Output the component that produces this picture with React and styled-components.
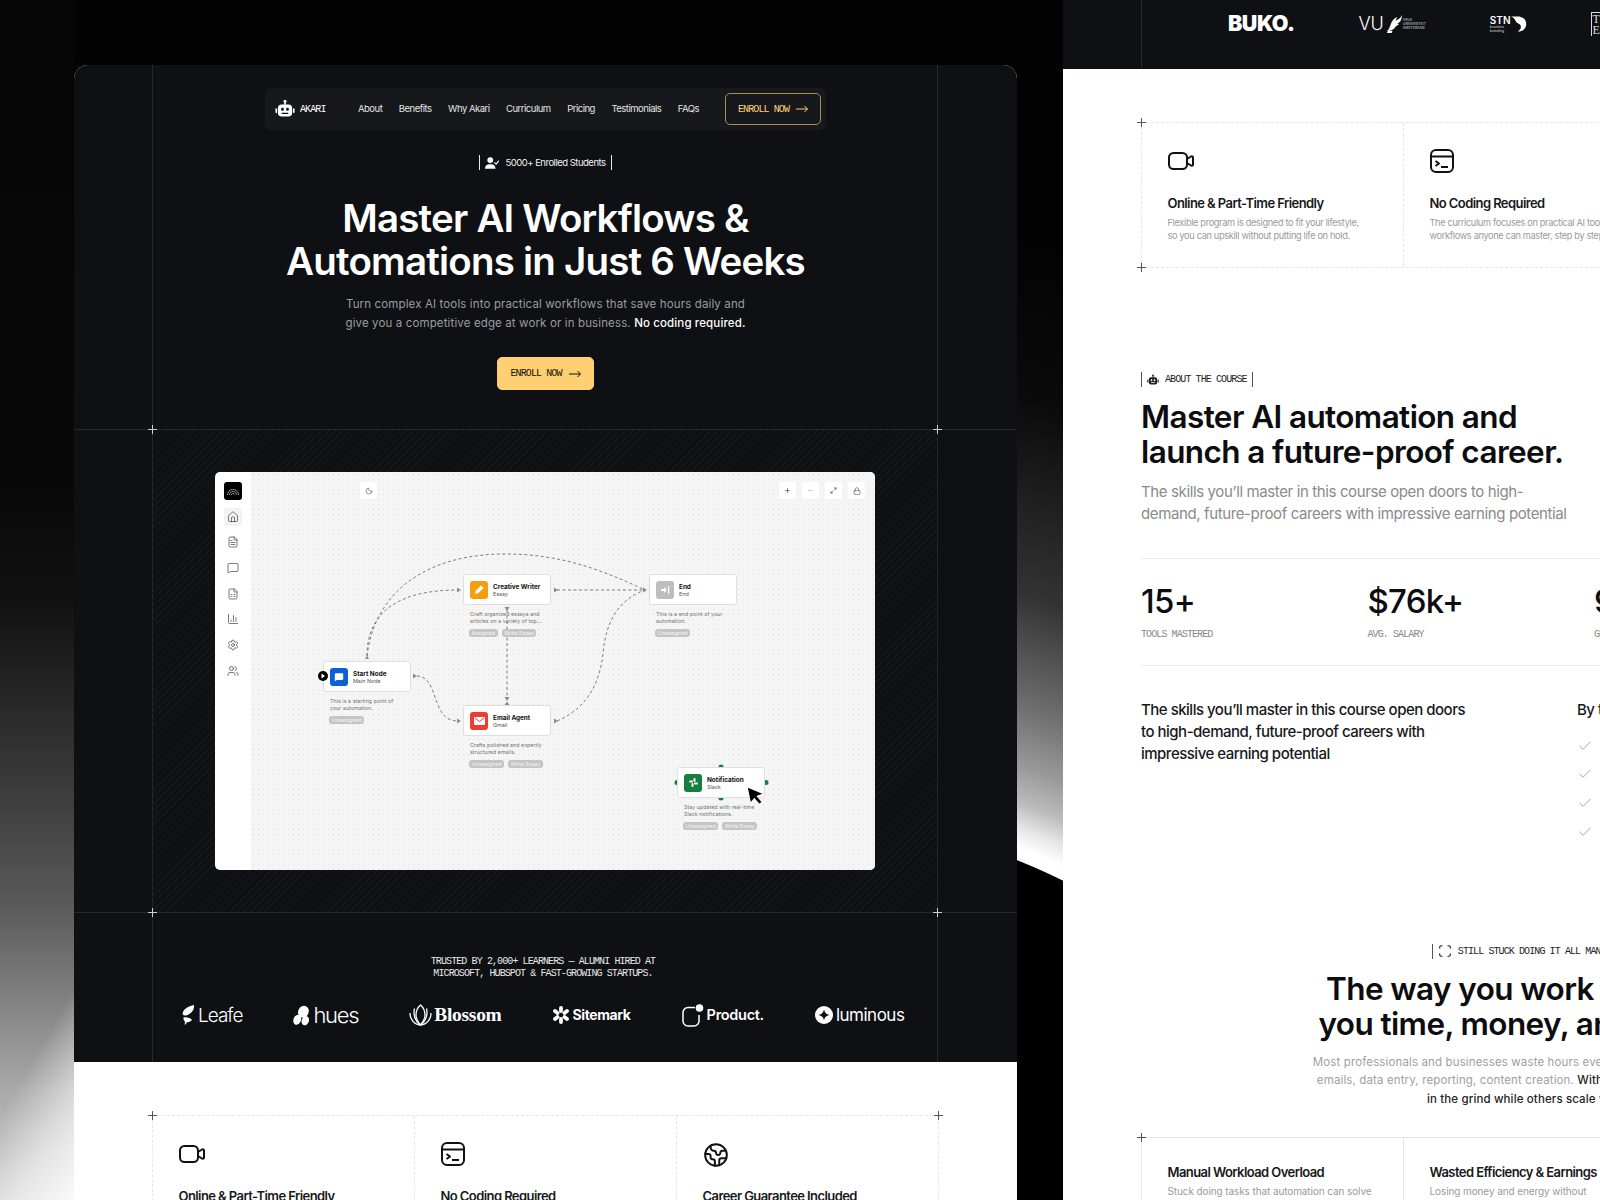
import React from 'react';
import styled, { createGlobalStyle } from 'styled-components';
import {
    Check, Earth, FileText, House, MessageSquare, FileSpreadsheet, ChartColumn,
    Settings, Users, Moon, Plus, Minus, Maximize2, Lock, Scan,
} from 'lucide-react';

const sans = `Inter, "Liberation Sans", sans-serif`;
const mono = `"Liberation Mono", "DejaVu Sans Mono", monospace`;
const dark = '#0e1014';
const guide = '#26282c';
const gold = '#ffd27a';

const GlobalStyle = createGlobalStyle`
    html, body {
        margin: 0;
        padding: 0;
        background: #030303;
    }
    * {
        box-sizing: border-box;
    }
`;

const Page = styled.div`
    width: 1600px;
    height: 1200px;
    overflow: hidden;
    display: flex;
    gap: 46px;
    padding-left: 74px;
    align-items: flex-start;
    font-family: ${sans};
    background-color: #030303;
    background-repeat: no-repeat;
    background-size: 74px 1200px, 74px 1200px, auto, auto;
    background-image:
        linear-gradient(120deg, transparent 84%, rgba(255, 255, 255, .55) 92%, rgba(255, 255, 255, .9) 100%),
        linear-gradient(180deg, #050505 0, #080808 40%, #111 50%, #3c3c3c 66%, #5a5a5a 75.5%, #8a8a8a 85%, #aaa 91%, #c8c8c8 100%),
        radial-gradient(circle at 796px 1418px, #000 599.5px, transparent 600.5px),
        radial-gradient(circle at 796px 1418px, #fff 600px, #fff 612px, #e8e8e8 630px, #bbb 655px, #999 690px, #707070 744px, #333 854px, #0a0a0a 1047px, #030303 1200px);
`;
const Window = styled.div`
    width: 943px;
    flex-shrink: 0;
    margin-top: ${p => p.$top || 0}px;
    border-radius: ${p => p.$top ? '14px 14px 0 0' : '0'};
    overflow: hidden;
    background: #fff;
`;
const DarkPanel = styled.div`
    background-color: ${dark};
    background-repeat: no-repeat;
    background-size: 1px 100%, 1px 100%;
    background-position: 78px 0, 863px 0;
    background-image: linear-gradient(${guide}, ${guide}), linear-gradient(${guide}, ${guide});
`;
const Hero = styled.section`
    height: 364px;
    padding-top: 23px;
    display: flex;
    flex-direction: column;
    align-items: center;
`;
const Nav = styled.nav`
    width: 561px;
    height: 42px;
    padding: 0 5px 0 10px;
    display: flex;
    align-items: center;
    background: #16181c;
    border-radius: 5px;
`;
const Brand = styled.div`
    width: 83px;
    display: flex;
    align-items: center;
    gap: 5px;
    color: #fff;
`;
const Mono = styled.span`
    font-family: ${mono};
    font-size: 10px;
    letter-spacing: -.9px;
    color: ${p => p.$color || '#fff'};
    white-space: nowrap;
`;
const NavLinks = styled.div`
    display: flex;
    gap: 16.5px;
    padding-bottom: 1px;
`;
const NavLink = styled.a`
    font-size: 9.5px;
    letter-spacing: -.5px;
    color: #e4e4e4;
    white-space: nowrap;
`;
const Button = styled.a`
    height: ${p => p.$solid ? 33 : 32}px;
    width: ${p => p.$solid ? 97 : 96}px;
    margin-left: ${p => p.$solid ? 0 : 'auto'};
    display: flex;
    align-items: center;
    justify-content: center;
    gap: 7px;
    border-radius: 5px;
    background: ${p => p.$solid ? '#ffcf73' : 'transparent'};
    border: 1px solid ${p => p.$solid ? '#ffcf73' : '#a98d52'};
    color: ${p => p.$solid ? '#15130c' : gold};
`;
const Badge = styled.div`
    height: 15px;
    display: flex;
    align-items: center;
    gap: ${p => p.$gap || 6}px;
    padding: 0 5px;
    border-left: 1px solid ${p => p.$line};
    border-right: 1px solid ${p => p.$line};
`;
const BadgeText = styled.span`
    font-size: 9.5px;
    letter-spacing: -.5px;
    color: #f0f0f0;
    white-space: nowrap;
`;
const HeroBadge = styled(Badge)`
    margin-top: 25px;
`;
const Title = styled.h1`
    margin: 27px 0 0;
    font-size: 38.5px;
    line-height: 43px;
    font-weight: 600;
    letter-spacing: -.8px;
    text-align: center;
    color: #fff;
    white-space: nowrap;
`;
const Lead = styled.p`
    margin: 12px 0 25px;
    font-size: 11.5px;
    line-height: 18.5px;
    letter-spacing: .13px;
    text-align: center;
    color: #9b9da1;
    white-space: nowrap;
`;
const Strong = styled.span`
    color: ${p => p.$color || '#fff'};
    font-weight: 500;
`;
const Showcase = styled.section`
    position: relative;
    height: 484px;
    padding: 0 79px 0 78px;
    border-top: 1px solid ${guide};
    border-bottom: 1px solid ${guide};
`;
const Hatch = styled.div`
    height: 100%;
    display: flex;
    align-items: center;
    justify-content: center;
    background: repeating-linear-gradient(135deg, #16181c 0 1px, transparent 1px 5px);
`;
const Cross = styled.span`
    position: absolute;
    width: 9px;
    height: 9px;
    ${p => p.$right ? 'right: 75px' : 'left: 74px'};
    ${p => p.$bottom ? 'bottom: -5px' : 'top: -5px'};
    background:
        linear-gradient(${p => p.$color}, ${p => p.$color}) center / 1px 100% no-repeat,
        linear-gradient(${p => p.$color}, ${p => p.$color}) center / 100% 1px no-repeat;
`;
const AppCard = styled.div`
    width: 660px;
    height: 398px;
    display: flex;
    border-radius: 5px;
    overflow: hidden;
    background: #fff;
`;
const Sidebar = styled.aside`
    width: 36px;
    flex-shrink: 0;
    padding-top: 10px;
    display: flex;
    flex-direction: column;
    align-items: center;
    gap: 7.7px;
    color: #333;
`;
const SideLogo = styled.div`
    width: 18px;
    height: 18px;
    border-radius: 3px;
    background: #000;
    display: flex;
    align-items: center;
    justify-content: center;
`;
const SideItem = styled.div`
    width: 18px;
    height: 18px;
    border-radius: 3px;
    background: ${p => p.$active ? '#f3f3f3' : 'transparent'};
    display: flex;
    align-items: center;
    justify-content: center;
`;
const Canvas = styled.div`
    position: relative;
    flex: 1;
    background-color: #f5f5f5;
    background-image: radial-gradient(#e2e2e2 .6px, transparent .7px);
    background-size: 5px 5px;
`;
const CanvasTools = styled.div`
    position: absolute;
    top: 10px;
    left: ${p => p.$left}px;
    display: flex;
    gap: 6px;
`;
const ToolButton = styled.div`
    width: 17px;
    height: 17px;
    border-radius: 2px;
    background: #fff;
    color: #333;
    display: flex;
    align-items: center;
    justify-content: center;
`;
const Edges = styled.svg`
    position: absolute;
    inset: 0;
`;
const FlowNode = styled.div`
    position: absolute;
    left: ${p => p.$x}px;
    top: ${p => p.$y}px;
    width: 88px;
`;
const NodeBox = styled.div`
    height: 31px;
    padding: 0 6px;
    display: flex;
    align-items: center;
    gap: 5px;
    background: #fff;
    border: 1px solid #dedede;
    border-radius: 3px;
`;
const NodeIcon = styled.div`
    width: 18px;
    height: 18px;
    flex-shrink: 0;
    border-radius: 3px;
    background: ${p => p.$color};
    color: #fff;
    display: flex;
    align-items: center;
    justify-content: center;
`;
const NodeLabel = styled.div`
    padding-top: 3px;
`;
const NodeTitle = styled.div`
    font-size: 6.4px;
    line-height: 7.5px;
    font-weight: 700;
    color: #111;
    white-space: nowrap;
`;
const NodeSub = styled.div`
    font-size: 5.4px;
    line-height: 7px;
    color: #555;
`;
const NodeDesc = styled.div`
    margin-top: 6px;
    padding-left: 7px;
    font-size: 5.2px;
    line-height: 7.4px;
    letter-spacing: .1px;
    color: #707070;
    white-space: nowrap;
`;
const Tags = styled.div`
    margin-top: 3px;
    padding-left: 6px;
    display: flex;
    gap: 4px;
`;
const Tag = styled.span`
    height: 8.5px;
    padding: 0 2.5px;
    border-radius: 3px;
    background: #c4c4c4;
    color: #f4f4f4;
    font-size: 5.4px;
    line-height: 8.5px;
    white-space: nowrap;
`;
const Trusted = styled.section`
    height: 149px;
    padding-top: 43px;
`;
const TrustedText = styled(Mono)`
    display: block;
    line-height: 12px;
    text-align: center;
    color: #e8e8e8;
    padding-right: 5px;
`;
const LogoRow = styled.div`
    margin-top: ${p => p.$top || 0}px;
    padding-left: ${p => p.$left}px;
    height: ${p => p.$height || 30}px;
    display: flex;
    align-items: center;
    gap: ${p => p.$gap}px;
    color: #fff;
`;
const LogoMark = styled.div`
    display: flex;
    align-items: center;
    gap: ${p => p.$gap || 0}px;
    flex-shrink: 0;
`;
const Wordmark = styled.span`
    font-family: ${p => p.$serif ? '"Liberation Serif", serif' : sans};
    font-size: ${p => p.$size}px;
    font-weight: ${p => p.$weight || 400};
    letter-spacing: ${p => p.$track || 0}px;
    line-height: 1;
    color: #fff;
`;
const TinyLines = styled.span`
    font-size: 3.4px;
    line-height: 4.2px;
    color: #ddd;
    white-space: nowrap;
`;
const TopMark = styled.span`
    border-top: 1px solid #ddd;
    border-left: 1px solid #ddd;
    padding: 1px 0 0 1px;
    font-family: "Liberation Serif", serif;
    font-size: 12px;
    line-height: 11px;
    color: #ddd;
`;
const BandSpacer = styled.div`
    height: 21px;
`;
const WhiteSection = styled.section`
    padding: 53px 79px 0 78px;
    background: #fff;
`;
const CardGrid = styled.div`
    position: relative;
    display: grid;
    grid-template-columns: 262px 262px 262px;
    height: ${p => p.$height || 146}px;
    border-top: 1px ${p => p.$solid ? 'solid' : 'dashed'} #e6e6e6;
    border-bottom: ${p => p.$solid ? 'none' : '1px dashed #e6e6e6'};
    border-left: 1px ${p => p.$solid ? 'solid' : 'dashed'} #e6e6e6;
`;
const GridCard = styled.div`
    padding: ${p => p.$top}px 0 0 25.5px;
    border-right: 1px ${p => p.$solid ? 'solid' : 'dashed'} #e6e6e6;
`;
const CardIcon = styled.div`
    height: 24px;
    margin-bottom: 21px;
    color: #111;
`;
const CardTitle = styled.h3`
    margin: 0;
    font-size: 13px;
    line-height: 18px;
    font-weight: 600;
    letter-spacing: -.58px;
    color: #17181a;
    white-space: nowrap;
`;
const CardText = styled.p`
    margin: 4px 0 0;
    font-size: ${p => p.$small ? 9.2 : 10}px;
    line-height: 13px;
    letter-spacing: ${p => p.$small ? -.33 : -.1}px;
    color: #9a9a9a;
    white-space: nowrap;
`;
const AboutBadge = styled(Badge)`
    margin-top: 104px;
    display: inline-flex;
`;
const Heading = styled.h2`
    margin: ${p => p.$top}px 0 0;
    font-size: 31.5px;
    line-height: 35px;
    font-weight: 600;
    letter-spacing: -.6px;
    color: #0c0d0f;
    white-space: nowrap;
`;
const SubHeading = styled.p`
    margin: 12px 0 0;
    font-size: 15px;
    line-height: 22px;
    letter-spacing: -.38px;
    color: #8a8a8a;
    white-space: nowrap;
`;
const Stats = styled.div`
    margin-top: 33px;
    padding: 23px 0 24px;
    display: grid;
    grid-template-columns: 226.5px 226.5px 226.5px;
    border-top: 1px solid #ececec;
    border-bottom: 1px solid #ececec;
`;
const StatValue = styled.div`
    font-size: 33px;
    line-height: 38px;
    font-weight: 500;
    letter-spacing: -.7px;
    color: #0c0d0f;
    white-space: nowrap;
`;
const StatLabel = styled(Mono)`
    display: block;
    margin-top: 9px;
    line-height: 12px;
`;
const Skills = styled.div`
    height: 278px;
    padding-top: 33px;
    display: grid;
    grid-template-columns: 436px 1fr;
`;
const SkillsText = styled.p`
    margin: 0;
    font-size: 15px;
    line-height: 22px;
    font-weight: 500;
    letter-spacing: -.5px;
    color: #17181a;
    white-space: nowrap;
`;
const CheckList = styled.ul`
    margin: 17px 0 0;
    padding: 0;
    list-style: none;
    display: flex;
    flex-direction: column;
    gap: 12.7px;
    color: #777;
`;
const CheckItem = styled.li`
    height: 16px;
`;
const Problem = styled.div`
    display: flex;
    flex-direction: column;
    align-items: center;
    text-align: center;
`;
const ProblemBadge = styled(Badge)`
    border-right: 0;
`;
const ProblemLead = styled(Lead)`
    margin: 12px 0 29px;
    color: #a0a0a0;
`;

const RobotIcon = ({ size = 22, color = '#fff', eye = dark }) => (
    <svg width={size} height={size} viewBox="0 0 24 24">
        <circle cx="12" cy="2.8" r="1.8" fill={color}/>
        <rect x="11" y="3" width="2" height="4" fill={color}/>
        <rect x="3.5" y="6.5" width="17" height="14.5" rx="4.5" fill={color}/>
        <rect x="0.5" y="11" width="2" height="6" rx="1" fill={color}/>
        <rect x="21.5" y="11" width="2" height="6" rx="1" fill={color}/>
        <rect x="7.5" y="10.5" width="3" height="3.6" rx=".8" fill={eye}/>
        <rect x="13.5" y="10.5" width="3" height="3.6" rx=".8" fill={eye}/>
        <rect x="8" y="16.5" width="8" height="1.6" rx=".5" fill={eye}/>
    </svg>
);
const LongArrow = () => (
    <svg width="12" height="8" viewBox="0 0 12 8" fill="none" stroke="currentColor" strokeWidth="1">
        <path d="M0 4h11.500M8.500 1l3 3-3 3"/>
    </svg>
);
const UserTickIcon = () => (
    <svg width="14" height="14" viewBox="0 0 24 24" fill="#fff">
        <circle cx="9" cy="7" r="5"/>
        <path d="M0 22c0-6 3.500-8 9-8s9 2 9 8z"/>
        <path d="M16 11l3 3 5-6" fill="none" stroke="#fff" strokeWidth="2"/>
    </svg>
);
const VideoGlyph = () => (
    <svg width="26" height="24" viewBox="0 0 26 24" fill="none" stroke="currentColor" strokeWidth="2" strokeLinejoin="round">
        <rect x="1" y="4" width="18" height="16" rx="4.500"/>
        <path d="M19 10l4-2.500c.8-.5 2 0 2 1v7c0 1-1.200 1.500-2 1l-4-2.500"/>
    </svg>
);
const TerminalGlyph = () => (
    <svg width="24" height="24" viewBox="0 0 24 24" fill="none" stroke="currentColor" strokeWidth="2" strokeLinejoin="round">
        <rect x="1" y="1" width="22" height="22" rx="5"/>
        <path d="M1 7.500h22"/>
        <path d="M5.500 12l3.500 2.500-3.500 2.500"/>
        <path d="M11 18h7"/>
    </svg>
);
const FlowLogo = () => (
    <svg width="12" height="12" viewBox="0 0 24 24" fill="none" stroke="#ddd" strokeWidth="1.800" strokeDasharray="3 1">
        <path d="M1 20a11 11 0 0 1 22 0"/>
        <path d="M5 20a7 7 0 0 1 14 0"/>
        <path d="M9 20a3 3 0 0 1 6 0"/>
    </svg>
);
const Cursor = () => (
    <svg viewBox="0 0 20 20" width="17" height="17" style={{ position: 'absolute', left: 70, top: 20 }}>
        <path d="M1 1l17 7-7 2.500 6 7-2.500 2-6-7-4 5z" fill="#000"/>
    </svg>
);

const LeafeMark = () => (
    <svg width="13" height="20" viewBox="0 0 13 20" fill="#fff">
        <path d="M12 0c.5 4-1.500 8.500-8 10.500C1 11 0 9 1 7c1.500-3.500 6-6 11-7z"/>
        <path d="M1.500 12.500c3.500-.5 7 .5 8.500 2.500-1.500 1.500-3 2.200-5 2.300L3 20c-.5-1-.3-2 .3-3C1.800 15.500 1.200 14 1.500 12.500z"/>
    </svg>
);
const HuesMark = () => (
    <svg width="17" height="21" viewBox="0 0 18 21" fill="#fff">
        <ellipse cx="11" cy="6.500" rx="5.500" ry="6.500" transform="rotate(25 11 6.500)"/>
        <ellipse cx="4.500" cy="15" rx="4" ry="5.500" transform="rotate(20 4.500 15)"/>
        <ellipse cx="13" cy="16" rx="3.800" ry="5" transform="rotate(20 13 16)"/>
    </svg>
);
const BlossomMark = () => (
    <svg width="23" height="22" viewBox="0 0 23 22" fill="none" stroke="#fff" strokeWidth="1.300">
        <path d="M11.500 1c3.500 3 4.500 7 4.500 10s-2 7-4.500 10c-2.500-3-4.500-7-4.500-10s1-7 4.500-10z"/>
        <path d="M5.500 4.500c-1.500 6 .5 13 6 16.500M17.500 4.500c1.500 6-.5 13-6 16.500"/>
        <path d="M1 9c0 6 4 11.500 10.500 12M22 9c0 6-4 11.500-10.500 12"/>
    </svg>
);
const SitemarkMark = () => (
    <svg width="16" height="18" viewBox="0 0 16 18" stroke="#fff" strokeWidth="3.800" strokeLinecap="round">
        <path d="M8 2v3M8 13v3M2 5l2.500 2M11.500 11L14 13M2 13l2.500-2M11.500 7L14 5"/>
    </svg>
);
const ProductMark = () => (
    <svg width="22" height="23" viewBox="0 0 22 23" fill="none">
        <path d="M13 3.500H6a5 5 0 0 0-5 5v8.500a5 5 0 0 0 5 5h6a5 5 0 0 0 5-5V11" stroke="#fff" strokeWidth="1.500"/>
        <circle cx="17.500" cy="4" r="3.800" fill="#fff"/>
    </svg>
);
const LuminousMark = () => (
    <svg width="18" height="18" viewBox="0 0 18 18">
        <circle cx="9" cy="9" r="9" fill="#fff"/>
        <path d="M9 3.500c.6 3.200 2.300 4.900 5.500 5.500-3.200.6-4.900 2.300-5.500 5.500-.6-3.200-2.300-4.900-5.500-5.500 3.200-.6 4.900-2.300 5.500-5.500z" fill={dark}/>
    </svg>
);
const Griffin = () => (
    <svg width="17" height="19" viewBox="0 0 18 20" fill="#fff">
        <path d="M18 0c-1 3-4 5-7 6l2-4c-3 1-6 4-7 8l-2 5-2 2 3-.5c3 0 5-2 6-4l4-3-2-.5 3-2c1-2 2-4 2-7z"/>
        <path d="M3 17l5 0-1 2-5 0z"/>
    </svg>
);
const StnSwoosh = () => (
    <svg width="16" height="20" viewBox="0 0 21 20" fill="#fff">
        <path d="M0 0h9c6 0 11 4 11 10s-5 10-11 10c2-2 4-3 4-6 0-5-5-4-7-8C5 3 3 1 0 0z"/>
    </svg>
);

const ARROWS = [
    '413,674.500 417,677 413,679.500',
    '365,660 367,656.500 369,660',
    '457,588.500 461,591 457,593.500',
    '554,588.500 558,591 554,593.500',
    '504.500,608 507,612 509.500,608',
    '504.500,698 507,702 509.500,698',
    '504.500,706 507,702.500 509.500,706',
    '457,719.500 461,722 457,724.500',
    '554,719.500 558,722 554,724.500',
    '643,588.500 647,591 643,593.500',
];
const PATHS = [
    'M417 677 C440 678, 430 722, 458 722',
    'M367 657 C367 612, 400 591, 458 591',
    'M367 657 C375 590, 430 555, 505 555 C560 555, 600 570, 645 591',
    'M557 591 L645 591',
    'M507 611 L507 700',
    'M557 722 C590 708, 600 680, 603 655 C606 620, 620 600, 645 591',
];
const FlowEdges = () => (
    <Edges width="624" height="398" viewBox="251 473 624 398">
        <g fill="none" stroke="#7c7c7c" strokeWidth="1" strokeDasharray="3 2.500">
            {PATHS.map(d => <path key={d} d={d}/>)}
        </g>
        <g fill="#8c8c8c">
            {ARROWS.map(p => <polygon key={p} points={p}/>)}
        </g>
        <g fill="#15803d">
            <circle cx="721" cy="768" r="2.500"/>
            <circle cx="721" cy="799" r="2.500"/>
            <circle cx="677" cy="783.500" r="2.500"/>
            <circle cx="766" cy="783.500" r="2.500"/>
        </g>
    </Edges>
);

const FLOW_NODES = [
    {
        id: 'start', x: 72, y: 189, color: '#0b5fd8', title: 'Start Node', sub: 'Main Node',
        desc: ['This is a starting point of', 'your automation.'], tags: ['Unassigned'],
        glyph: <MessageSquare size={10} fill="#fff" strokeWidth={0}/>,
    },
    {
        id: 'writer', x: 212, y: 102, color: '#f59e0b', title: 'Creative Writer', sub: 'Essay',
        desc: ['Craft organized essays and', 'articles on a variety of top...'], tags: ['Assigned', 'Write Essay'],
        glyph: <svg width="10" height="10" viewBox="0 0 10 10" fill="#fff"><path d="M1 9l1-3.500L7 .5 9.500 3l-5 5z"/></svg>,
    },
    {
        id: 'email', x: 212, y: 233, color: '#ef3b33', title: 'Email Agent', sub: 'Gmail',
        desc: ['Crafts polished and expertly', 'structured emails.'], tags: ['Unassigned', 'Write Essay'],
        glyph: <svg width="11" height="10" viewBox="0 0 11 10"><rect y="1" width="11" height="8" rx="1" fill="#fff"/><path d="M1 2l4.500 3.500L10 2" fill="none" stroke="#ef3b33" strokeWidth="1"/></svg>,
    },
    {
        id: 'end', x: 398, y: 102, color: '#bdbdbd', title: 'End', sub: 'End',
        desc: ['This is a end point of your', 'automation.'], tags: ['Unassigned'],
        glyph: <svg width="10" height="10" viewBox="0 0 10 10" fill="#fff"><path d="M1 4h3V2l3 3-3 3V6H1z"/><rect x="8" y="1" width="1.200" height="8"/></svg>,
    },
    {
        id: 'slack', x: 426, y: 295, color: '#15803d', title: 'Notification', sub: 'Slack',
        desc: ['Stay updated with real-time', 'Slack notifications.'], tags: ['Unassigned', 'Write Essay'],
        glyph: <svg width="11" height="11" viewBox="0 0 11 11" fill="#fff"><rect x="1" y="3.500" width="4" height="2" rx="1"/><rect x="6" y="5.500" width="4" height="2" rx="1"/><rect x="3.500" y="6" width="2" height="4" rx="1"/><rect x="5.500" y="1" width="2" height="4" rx="1"/></svg>,
        cursor: true,
    },
];

const SIDE_ICONS = [House, FileText, MessageSquare, FileSpreadsheet, ChartColumn, Settings, Users];

const Workflow = () => (
    <AppCard>
        <Sidebar>
            <SideLogo><FlowLogo/></SideLogo>
            {SIDE_ICONS.map((Icon, i) => (
                <SideItem key={i} $active={i === 0}><Icon size={12} strokeWidth={1.3}/></SideItem>
            ))}
        </Sidebar>
        <Canvas>
            <CanvasTools $left={109}>
                <ToolButton><Moon size={8} strokeWidth={1.5}/></ToolButton>
            </CanvasTools>
            <CanvasTools $left={528}>
                <ToolButton><Plus size={7} strokeWidth={2}/></ToolButton>
                <ToolButton><Minus size={7} strokeWidth={1.500} color="#888"/></ToolButton>
                <ToolButton><Maximize2 size={7} strokeWidth={1.800}/></ToolButton>
                <ToolButton><Lock size={8} strokeWidth={1.500}/></ToolButton>
            </CanvasTools>
            <FlowEdges/>
            {FLOW_NODES.map(n => (
                <FlowNode key={n.id} $x={n.x} $y={n.y}>
                    <NodeBox>
                        <NodeIcon $color={n.color}>{n.glyph}</NodeIcon>
                        <NodeLabel>
                            <NodeTitle>{n.title}</NodeTitle>
                            <NodeSub>{n.sub}</NodeSub>
                        </NodeLabel>
                    </NodeBox>
                    <NodeDesc>{n.desc.map(line => <div key={line}>{line}</div>)}</NodeDesc>
                    <Tags>{n.tags.map(t => <Tag key={t}>{t}</Tag>)}</Tags>
                    {n.cursor && <Cursor/>}
                </FlowNode>
            ))}
            <svg width="12" height="12" viewBox="0 0 12 12" style={{ position: 'absolute', left: 66, top: 198 }}>
                <circle cx="6" cy="6" r="5" fill="#000"/>
                <path d="M4.500 3.500l3.500 2.500-3.500 2.500z" fill="#fff"/>
            </svg>
        </Canvas>
    </AppCard>
);

const FEATURES = [
    { icon: <VideoGlyph/>, title: 'Online & Part-Time Friendly', text: ['Flexible program is designed to fit your lifestyle,', 'so you can upskill without putting life on hold.'] },
    { icon: <TerminalGlyph/>, title: 'No Coding Required', text: ['The curriculum focuses on practical AI tools and', 'workflows anyone can master, step by step.'] },
    { icon: <Earth size={26} strokeWidth={1.8}/>, title: 'Career Guarantee Included', text: ['Get placement support until you land a role,', 'backed by our career guarantee.'] },
];

const FeatureCross = styled(Cross)`
    ${p => p.$right ? 'right: -5px' : 'left: -5px'};
`;
const Features = ({ crossRight }) => (
    <CardGrid>
        {FEATURES.map(f => (
            <GridCard key={f.title} $top={26}>
                <CardIcon>{f.icon}</CardIcon>
                <CardTitle>{f.title}</CardTitle>
                <CardText $small>{f.text.map(l => <div key={l}>{l}</div>)}</CardText>
            </GridCard>
        ))}
        <FeatureCross $color="#555"/>
        {crossRight ? <FeatureCross $right $color="#555"/> : <FeatureCross $bottom $color="#555"/>}
    </CardGrid>
);

const LeftWindow = () => (
    <Window $top={65}>
        <DarkPanel>
            <Hero>
                <Nav>
                    <Brand><RobotIcon size={20}/><Mono>AKARI</Mono></Brand>
                    <NavLinks>
                        {['About', 'Benefits', 'Why Akari', 'Curriculum', 'Pricing', 'Testimonials', 'FAQs'].map(l => (
                            <NavLink key={l}>{l}</NavLink>
                        ))}
                    </NavLinks>
                    <Button>
                        <Mono $color={gold}>ENROLL NOW</Mono>
                        <LongArrow/>
                    </Button>
                </Nav>
                <HeroBadge $line="#e8e8e8">
                    <UserTickIcon/>
                    <BadgeText>5000+ Enrolled Students</BadgeText>
                </HeroBadge>
                <Title>Master AI Workflows &amp;<br/>Automations in Just 6 Weeks</Title>
                <Lead>
                    Turn complex AI tools into practical workflows that save hours daily and<br/>
                    give you a competitive edge at work or in business. <Strong>No coding required.</Strong>
                </Lead>
                <Button $solid>
                    <Mono $color="#15130c">ENROLL NOW</Mono>
                    <LongArrow/>
                </Button>
            </Hero>
            <Showcase>
                <Hatch><Workflow/></Hatch>
                <Cross $color="#cfcfcf"/>
                <Cross $right $color="#cfcfcf"/>
                <Cross $bottom $color="#cfcfcf"/>
                <Cross $bottom $right $color="#cfcfcf"/>
            </Showcase>
            <Trusted>
                <TrustedText>TRUSTED BY 2,000+ LEARNERS — ALUMNI HIRED AT<br/>MICROSOFT, HUBSPOT &amp; FAST-GROWING STARTUPS.</TrustedText>
                <LogoRow $top={20} $left={108} $gap={51}>
                    <LogoMark $gap={3}><LeafeMark/><Wordmark $size={19} $weight={300} $track={-1}>Leafe</Wordmark></LogoMark>
                    <LogoMark $gap={3}><HuesMark/><Wordmark $size={22} $weight={300} $track={-1.3}>hues</Wordmark></LogoMark>
                    <LogoMark $gap={2}><BlossomMark/><Wordmark $serif $size={19.500} $weight={700} $track={-.3}>Blossom</Wordmark></LogoMark>
                    <LogoMark $gap={4}><SitemarkMark/><Wordmark $size={14} $weight={700} $track={-.4}>Sitemark</Wordmark></LogoMark>
                    <LogoMark $gap={3}><ProductMark/><Wordmark $size={14.500} $weight={600} $track={-.3}>Product.</Wordmark></LogoMark>
                    <LogoMark $gap={3}><LuminousMark/><Wordmark $size={17} $track={-.5}>luminous</Wordmark></LogoMark>
                </LogoRow>
            </Trusted>
        </DarkPanel>
        <WhiteSection>
            <Features crossRight/>
        </WhiteSection>
    </Window>
);

const RightWindow = () => (
    <Window>
        <DarkPanel>
            <LogoRow $left={165} $gap={64} $height={48}>
                <LogoMark><Wordmark $size={21.500} $weight={900} $track={-.5}>BUKO.</Wordmark></LogoMark>
                <LogoMark $gap={1}>
                    <Wordmark $size={18} $weight={300}>VU</Wordmark>
                    <Griffin/>
                    <TinyLines>VRIJE<br/>UNIVERSITEIT<br/>AMSTERDAM</TinyLines>
                </LogoMark>
                <LogoMark>
                    <TinyLines><Wordmark $size={10} $weight={600}>STN</Wordmark><br/>business<br/>branding</TinyLines>
                    <StnSwoosh/>
                </LogoMark>
                <LogoMark><TopMark>TOP<br/>Eng</TopMark></LogoMark>
            </LogoRow>
            <BandSpacer/>
        </DarkPanel>
        <WhiteSection>
            <Features/>
            <AboutBadge $line="#555" $gap={6}>
                <RobotIcon size={12} color="#222" eye="#fff"/>
                <Mono $color="#222">ABOUT THE COURSE</Mono>
            </AboutBadge>
            <Heading $top={9}>Master AI automation and<br/>launch a future-proof career.</Heading>
            <SubHeading>The skills you’ll master in this course open doors to high-<br/>demand, future-proof careers with impressive earning potential</SubHeading>
            <Stats>
                <div><StatValue>15+</StatValue><StatLabel $color="#888">TOOLS MASTERED</StatLabel></div>
                <div><StatValue>$76k+</StatValue><StatLabel $color="#888">AVG. SALARY</StatLabel></div>
                <div><StatValue>92%</StatValue><StatLabel $color="#888">GRADUATE HIRE RATE</StatLabel></div>
            </Stats>
            <Skills>
                <SkillsText>The skills you’ll master in this course open doors<br/>to high-demand, future-proof careers with<br/>impressive earning potential</SkillsText>
                <div>
                    <SkillsText>By the end of the course</SkillsText>
                    <CheckList>
                        {[0, 1, 2, 3].map(i => <CheckItem key={i}><Check size={16} strokeWidth={1}/></CheckItem>)}
                    </CheckList>
                </div>
            </Skills>
            <Problem>
                <ProblemBadge $line="#555">
                    <Scan size={14} strokeWidth={2} color="#222"/>
                    <Mono $color="#222">STILL STUCK DOING IT ALL MANUALLY?</Mono>
                </ProblemBadge>
                <Heading $top={12}>The way you work is costing<br/>you time, money, and energy.</Heading>
                <ProblemLead>
                    Most professionals and businesses waste hours every week on repetitive tasks:<br/>
                    emails, data entry, reporting, content creation. <Strong $color="#222">Without automation, you’ll stay</Strong><br/>
                    <Strong $color="#222">in the grind while others scale with AI.</Strong>
                </ProblemLead>
            </Problem>
            <CardGrid $solid $height={80}>
                <GridCard $solid $top={25}>
                    <CardTitle>Manual Workload Overload</CardTitle>
                    <CardText>Stuck doing tasks that automation can solve</CardText>
                </GridCard>
                <GridCard $solid $top={25}>
                    <CardTitle>Wasted Efficiency &amp; Earnings</CardTitle>
                    <CardText>Losing money and energy without</CardText>
                </GridCard>
                <FeatureCross $color="#555"/>
            </CardGrid>
        </WhiteSection>
    </Window>
);

const App = () => (
    <>
        <GlobalStyle/>
        <Page>
            <LeftWindow/>
            <RightWindow/>
        </Page>
    </>
);
export default App;
